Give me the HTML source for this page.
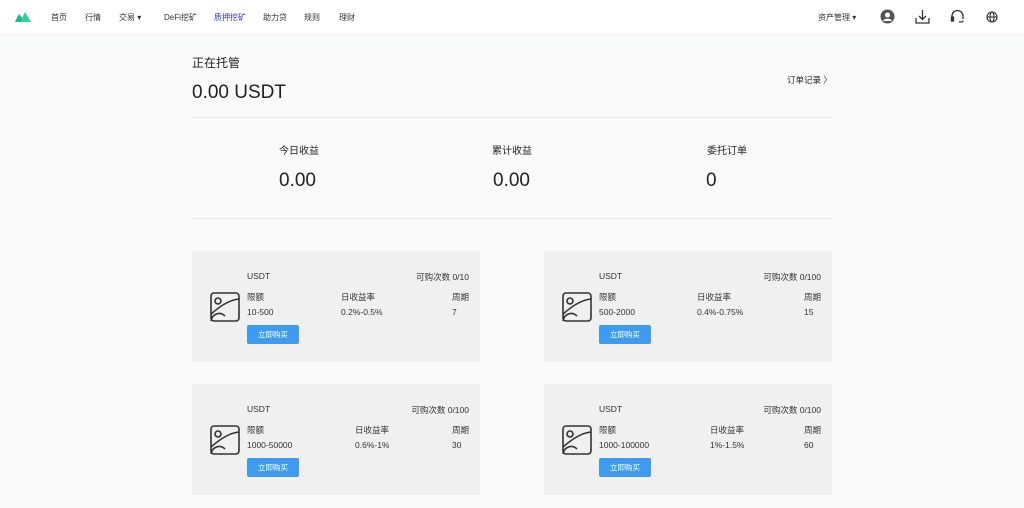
<!DOCTYPE html><html><head><meta charset="utf-8"><style>
body{margin:0;width:1024px;height:508px;background:#f9fafc;font-family:"Liberation Sans","Noto Sans CJK SC",sans-serif;color:#222;position:relative;overflow:hidden}
.a{position:absolute;white-space:nowrap}
.hd{position:absolute;left:0;top:0;width:1024px;height:34px;background:#fff;border-bottom:1px solid #f6eef0}
.nav{font-size:8px;color:#333;top:12px}
.card{position:absolute;width:288px;height:111px;background:#f0f0f0}
.card .a{font-size:8.5px;color:#333}
.btn{position:absolute;left:55px;top:74px;width:52px;height:19px;background:#3e9bef;border-radius:2px;color:#fff;font-size:7.5px;text-align:center;line-height:19px}
.ic{position:absolute;left:18px;top:41px}
</style></head><body>
<div class="hd">
<svg class="a" style="left:15px;top:11px" width="16" height="11" viewBox="0 0 16 11"><path d="M0 11L4 3 7 7 10 1 16 11Z" fill="#2ed39a"/><path d="M4 3L7 7 5 11 0 11Z" fill="#1fb884"/></svg>
<span class="a nav" style="left:51px">首页</span>
<span class="a nav" style="left:85px">行情</span>
<span class="a nav" style="left:119px">交易 ▾</span>
<span class="a nav" style="left:164px">DeFi挖矿</span>
<span class="a nav" style="left:214px;color:#3535b8">质押挖矿</span>
<span class="a nav" style="left:263px">助力贷</span>
<span class="a nav" style="left:304px">规则</span>
<span class="a nav" style="left:339px">理财</span>
<span class="a nav" style="left:818px">资产管理 ▾</span>
<svg class="a" style="left:880px;top:9px" width="15" height="15" viewBox="0 0 15 15"><circle cx="7.5" cy="7.5" r="7" fill="#555"/><circle cx="7.5" cy="6" r="2.5" fill="#fff"/><path d="M3 12c1-3 8-3 9 0" fill="#fff"/></svg>
<svg class="a" style="left:915px;top:9px" width="15" height="15" viewBox="0 0 15 15" fill="none" stroke="#333" stroke-width="1.3"><path d="M7.5 1v9M4 7l3.5 3.5L11 7M1 9v5h13V9"/></svg>
<svg class="a" style="left:950px;top:9px" width="15" height="15" viewBox="0 0 15 15" fill="none" stroke="#333" stroke-width="1.3"><path d="M2 9V7a5.5 5.5 0 0 1 11 0v3M9 13h2.5a1.5 1.5 0 0 0 1.5-1.5"/><rect x="1.5" y="8" width="2" height="4" fill="#333"/></svg>
<svg class="a" style="left:986px;top:11px" width="12" height="12" viewBox="0 0 12 12" fill="none" stroke="#333" stroke-width="1.1"><circle cx="6" cy="6" r="5"/><ellipse cx="6" cy="6" rx="2" ry="5"/><path d="M1 6h10"/></svg>
</div>
<span class="a" style="left:192px;top:54px;font-size:12px">正在托管</span>
<span class="a" style="left:192px;top:82px;font-size:19px">0.00 USDT</span>
<span class="a" style="left:787px;top:74px;font-size:8.5px">订单记录 〉</span>
<div class="a" style="left:192px;top:117px;width:640px;height:1px;background:#e5e6ea"></div>
<span class="a" style="left:279px;top:142px;font-size:10px">今日收益</span>
<span class="a" style="left:492px;top:142px;font-size:10px">累计收益</span>
<span class="a" style="left:707px;top:142px;font-size:10px">委托订单</span>
<span class="a" style="left:279px;top:170px;font-size:19px">0.00</span>
<span class="a" style="left:493px;top:170px;font-size:19px">0.00</span>
<span class="a" style="left:706px;top:170px;font-size:19px">0</span>
<div class="a" style="left:192px;top:218px;width:640px;height:1px;background:#e5e6ea"></div>

<div class="card" style="left:192px;top:251px">
<svg class="ic" width="30" height="30" viewBox="0 0 30 30" fill="none" stroke="#333" stroke-width="1.6"><rect x="1" y="1" width="28" height="28" rx="3"/><circle cx="8" cy="9" r="3"/><path d="M1 22C8 16 18 8 29 7M1 29C2 22 10 19 15 24"/></svg>
<span class="a" style="left:55px;top:20px">USDT</span><span class="a" style="right:11px;top:20px">可购次数 0/10</span>
<span class="a" style="left:55px;top:40px">限额</span><span class="a" style="left:149px;top:40px">日收益率</span><span class="a" style="right:11px;top:40px">周期</span>
<span class="a" style="left:55px;top:56px">10-500</span><span class="a" style="left:149px;top:56px">0.2%-0.5%</span><span class="a" style="left:260px;top:56px">7</span>
<div class="btn">立即购买</div></div>

<div class="card" style="left:544px;top:251px">
<svg class="ic" width="30" height="30" viewBox="0 0 30 30" fill="none" stroke="#333" stroke-width="1.6"><rect x="1" y="1" width="28" height="28" rx="3"/><circle cx="8" cy="9" r="3"/><path d="M1 22C8 16 18 8 29 7M1 29C2 22 10 19 15 24"/></svg>
<span class="a" style="left:55px;top:20px">USDT</span><span class="a" style="right:11px;top:20px">可购次数 0/100</span>
<span class="a" style="left:55px;top:40px">限额</span><span class="a" style="left:153px;top:40px">日收益率</span><span class="a" style="right:11px;top:40px">周期</span>
<span class="a" style="left:55px;top:56px">500-2000</span><span class="a" style="left:153px;top:56px">0.4%-0.75%</span><span class="a" style="left:260px;top:56px">15</span>
<div class="btn">立即购买</div></div>

<div class="card" style="left:192px;top:384px">
<svg class="ic" width="30" height="30" viewBox="0 0 30 30" fill="none" stroke="#333" stroke-width="1.6"><rect x="1" y="1" width="28" height="28" rx="3"/><circle cx="8" cy="9" r="3"/><path d="M1 22C8 16 18 8 29 7M1 29C2 22 10 19 15 24"/></svg>
<span class="a" style="left:55px;top:20px">USDT</span><span class="a" style="right:11px;top:20px">可购次数 0/100</span>
<span class="a" style="left:55px;top:40px">限额</span><span class="a" style="left:163px;top:40px">日收益率</span><span class="a" style="right:11px;top:40px">周期</span>
<span class="a" style="left:55px;top:56px">1000-50000</span><span class="a" style="left:163px;top:56px">0.6%-1%</span><span class="a" style="left:260px;top:56px">30</span>
<div class="btn">立即购买</div></div>

<div class="card" style="left:544px;top:384px">
<svg class="ic" width="30" height="30" viewBox="0 0 30 30" fill="none" stroke="#333" stroke-width="1.6"><rect x="1" y="1" width="28" height="28" rx="3"/><circle cx="8" cy="9" r="3"/><path d="M1 22C8 16 18 8 29 7M1 29C2 22 10 19 15 24"/></svg>
<span class="a" style="left:55px;top:20px">USDT</span><span class="a" style="right:11px;top:20px">可购次数 0/100</span>
<span class="a" style="left:55px;top:40px">限额</span><span class="a" style="left:166px;top:40px">日收益率</span><span class="a" style="right:11px;top:40px">周期</span>
<span class="a" style="left:55px;top:56px">1000-100000</span><span class="a" style="left:166px;top:56px">1%-1.5%</span><span class="a" style="left:260px;top:56px">60</span>
<div class="btn">立即购买</div></div>
</body></html>
